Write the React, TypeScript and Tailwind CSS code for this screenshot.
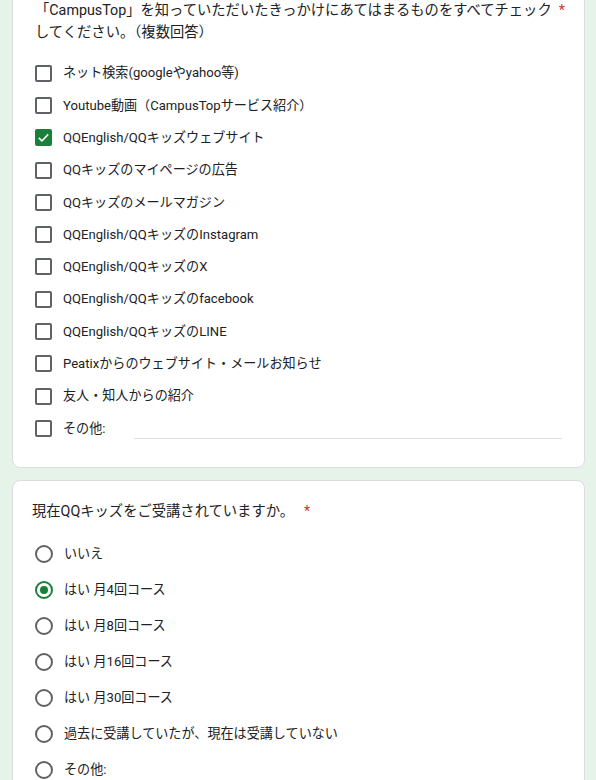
import React from "react";

const font = { fontFamily: 'Roboto, "Noto Sans CJK JP", sans-serif' };

const checkOptions = [
  "ネット検索(googleやyahoo等)",
  "Youtube動画（CampusTopサービス紹介）",
  "QQEnglish/QQキッズウェブサイト",
  "QQキッズのマイページの広告",
  "QQキッズのメールマガジン",
  "QQEnglish/QQキッズのInstagram",
  "QQEnglish/QQキッズのX",
  "QQEnglish/QQキッズのfacebook",
  "QQEnglish/QQキッズのLINE",
  "Peatixからのウェブサイト・メールお知らせ",
  "友人・知人からの紹介",
];

const radioOptions = [
  "いいえ",
  "はい 月4回コース",
  "はい 月8回コース",
  "はい 月16回コース",
  "はい 月30回コース",
  "過去に受講していたが、現在は受講していない",
];

function Checkbox({ checked }: { checked?: boolean }) {
  if (checked) {
    return (
      <div className="grid h-[17px] w-[17px] shrink-0 place-items-center rounded-[2px] bg-[#188038]">
        <svg viewBox="0 0 24 24" className="h-[15px] w-[15px]" fill="none" stroke="white" strokeWidth="2.6">
          <path d="M4.5 12.5l5 5 10-10.5" />
        </svg>
      </div>
    );
  }
  return <div className="h-[17px] w-[17px] shrink-0 rounded-[2px] border-2 border-[#5f6368]" />;
}

function Radio({ checked }: { checked?: boolean }) {
  return (
    <div
      className={[
        "grid h-[18px] w-[18px] shrink-0 place-items-center rounded-full border-2",
        checked ? "border-[#188038]" : "border-[#5f6368]",
      ].join(" ")}
    >
      {checked ? <div className="h-[8px] w-[8px] rounded-full bg-[#188038]" /> : null}
    </div>
  );
}

export default function App() {
  return (
    <div className="min-h-screen bg-[#e6f3e8] pl-[12px] pr-[11px] text-[#202124]" style={font}>
      <div className="-mt-[24px] rounded-lg border border-[#dadce0] bg-white pb-[22px] pt-[22px]">
        <div className="pl-[22px] pr-[8px] text-[14.3px] leading-[22px]">
          「CampusTop」を知っていただいたきっかけにあてはまるものをすべてチェック
          <span className="ml-[7px] text-[#d93025]">*</span>
          <br />
          してください。（複数回答）
        </div>

        <div className="mt-[14px] pl-[22px] pr-[22px]">
          {checkOptions.map((label, i) => (
            <div key={label} className="flex h-[32.3px] items-center gap-[11px] text-[13.1px]">
              <Checkbox checked={i === 2} />
              <span>{label}</span>
            </div>
          ))}
          <div className="flex h-[32.3px] items-center gap-[11px] text-[13.1px]">
            <Checkbox />
            <span>その他:</span>
            <div className="ml-[18px] mt-[20px] h-px flex-1 bg-[#e0e0e0]" />
          </div>
        </div>
      </div>

      <div className="mt-[12px] rounded-lg border border-[#dadce0] bg-white pb-[20px] pt-[19px]">
        <div className="pl-[19px] pr-[22px] text-[14.3px] leading-[22px]">
          現在QQキッズをご受講されていますか。
          <span className="ml-[10px] text-[#d93025]">*</span>
        </div>
        <div className="mt-[14px] pl-[22px] pr-[22px]">
          {radioOptions.map((label, i) => (
            <div key={label} className="flex h-[36px] items-center gap-[11px] text-[13.1px]">
              <Radio checked={i === 1} />
              <span>{label}</span>
            </div>
          ))}
          <div className="flex h-[36px] items-center gap-[11px] text-[13.1px]">
            <Radio />
            <span>その他:</span>
          </div>
        </div>
      </div>
    </div>
  );
}
